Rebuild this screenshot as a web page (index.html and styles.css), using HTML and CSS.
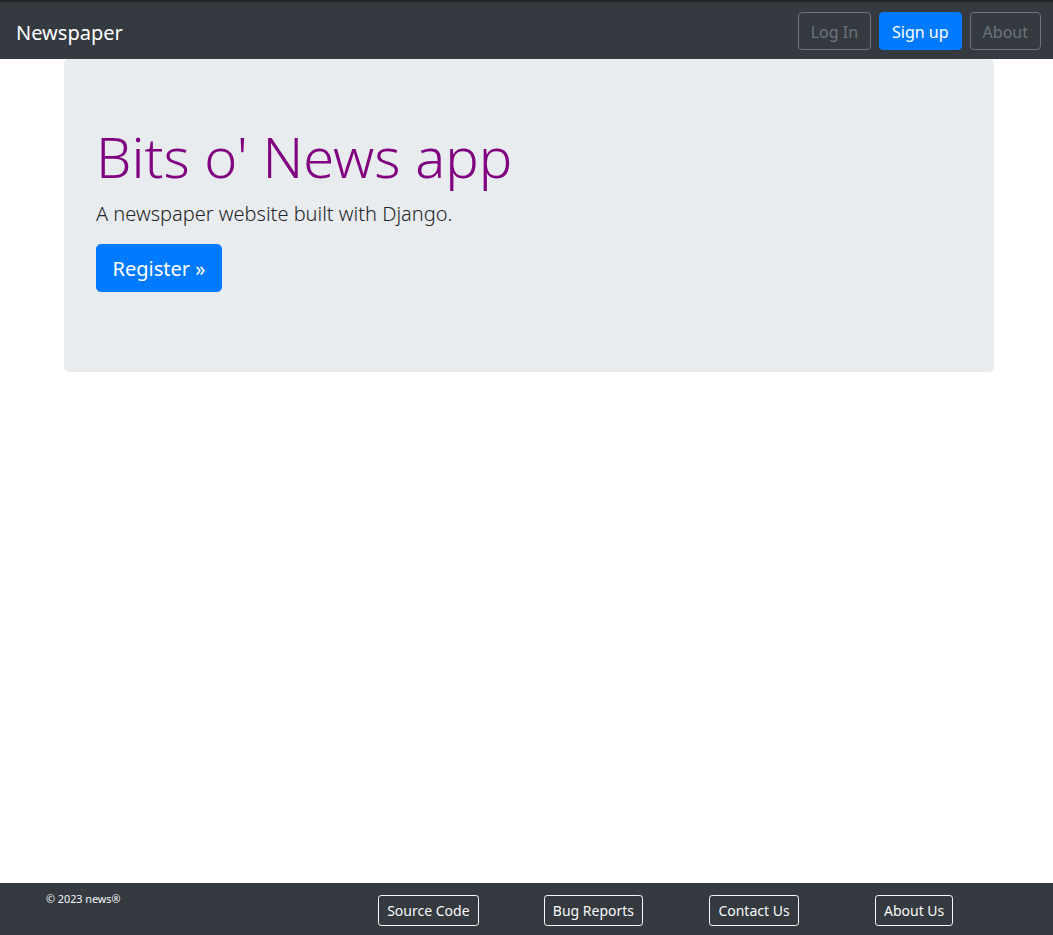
FILE: index.html
```html
<!DOCTYPE html>
<html lang="en">
<head>
<meta charset="utf-8">
<title>Newspaper</title>
<link rel="stylesheet" href="styles.css">
</head>
<body>
<div class="page">
  <nav class="navbar">
    <a class="brand" href="#">Newspaper</a>
    <div class="nav-actions">
      <a class="btn btn-outline-secondary" href="#">Log In</a>
      <a class="btn btn-primary" href="#">Sign up</a>
      <a class="btn btn-outline-secondary" href="#">About</a>
    </div>
  </nav>

  <main class="container">
    <section class="jumbotron">
      <h1 class="display">Bits o' News app</h1>
      <p class="lead">A newspaper website built with Django.</p>
      <p class="cta"><a class="btn btn-primary btn-lg" href="#">Register &raquo;</a></p>
    </section>
  </main>

  <footer class="footer">
    <div class="footer-grid">
      <div class="copy">&copy; 2023 news&reg;</div>
      <div class="fcol c3"><a class="btn btn-sm btn-outline-light" href="#">Source Code</a></div>
      <div class="fcol"><a class="btn btn-sm btn-outline-light" href="#">Bug Reports</a></div>
      <div class="fcol"><a class="btn btn-sm btn-outline-light" href="#">Contact Us</a></div>
      <div class="fcol"><a class="btn btn-sm btn-outline-light" href="#">About Us</a></div>
    </div>
  </footer>
</div>
</body>
</html>
```
FILE: styles.css
```css
* { box-sizing: border-box; }
html, body { margin: 0; padding: 0; }
body {
  font-family: "Noto Sans", "Open Sans", "DejaVu Sans", sans-serif;
  font-size: 16px;
  line-height: 1.5;
  color: #212529;
  background: #fff;
}
.page {
  min-height: 935px;
  display: flex;
  flex-direction: column;
}
a { text-decoration: none; }

.navbar {
  display: flex;
  align-items: center;
  justify-content: space-between;
  background: #343a40;
  border-top: 2px solid #222528;
  padding: 10px 12px 9px 16px;
}
.brand {
  color: #fff;
  font-size: 20px;
  line-height: 30px;
  padding-top: 3px;
}
.nav-actions { display: flex; gap: 8px; }

.btn {
  display: inline-block;
  font-size: 16px;
  line-height: 24px;
  padding: 7px 12px 5px;
  border: 1px solid transparent;
  border-radius: 4px;
  white-space: nowrap;
}
.btn-outline-secondary { color: #6c757d; border-color: #6c757d; }
.btn-primary { color: #fff; background: #007bff; border-color: #007bff; }
.btn-lg { font-size: 20px; line-height: 30px; padding: 9px 15.5px 7px; border-radius: 4.8px; }
.btn-sm { font-size: 14px; line-height: 21px; padding: 4px 8px; border-radius: 3.2px; }
.btn-outline-light { color: #f8f9fa; border-color: #f8f9fa; }

.container {
  width: 960px;
  margin: 0 auto;
  padding: 0 12.5px 0 17.5px;
  flex: 1;
}
.jumbotron {
  background: #e9ecef;
  border-radius: 4.8px;
  padding: 64px 32px;
}
.display {
  margin: 0 0 8px;
  font-size: 56px;
  font-weight: 300;
  line-height: 1.2;
  color: #800080;
}
.lead {
  margin: 0 0 16px;
  font-size: 20px;
  font-weight: 300;
  line-height: 30px;
  padding-top: 1px;
  margin-bottom: 15px;
}
.cta { margin: 0 0 16px; }

.footer {
  background: #343a40;
  padding: 8px 0 9px 46px;
}
.footer-grid {
  display: grid;
  grid-template-columns: repeat(6, 165.6px);
  align-items: start;
}
.copy {
  color: #f8f9fa;
  font-size: 10.8px;
  line-height: 15px;
}
.fcol { padding: 4px 0 0 1px; }
.c3 { grid-column: 3; }
```
